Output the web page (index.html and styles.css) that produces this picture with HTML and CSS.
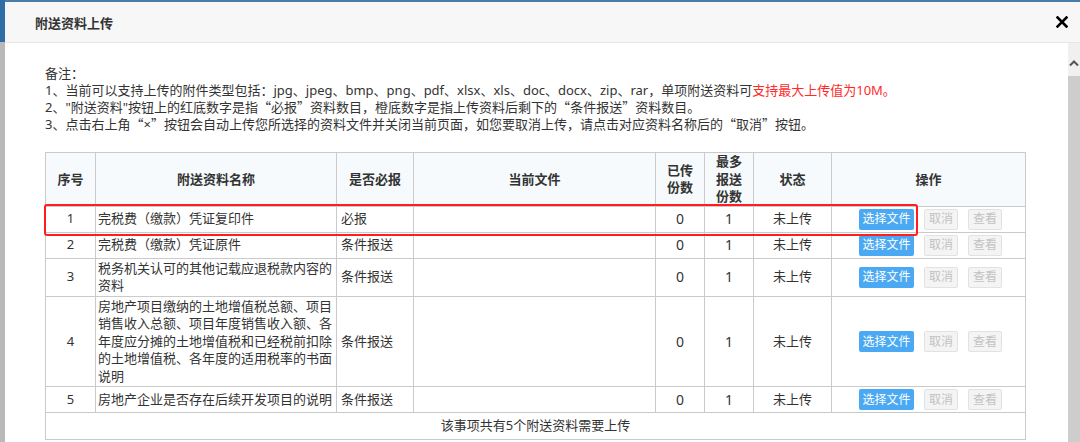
FILE: index.html
```html
<!DOCTYPE html>
<html lang="zh-CN">
<head>
    <meta charset="UTF-8">
    <title>附送资料上传</title>
    <link rel="stylesheet" href="styles.css">
</head>
<body>
<div class="page">
    <div class="side-strip"></div>
    <div class="modal">
        <div class="modal-header">
            <span class="modal-title">附送资料上传</span>
            <svg class="close" width="12" height="12" viewBox="0 0 12 12">
                <path d="M1.5 1.5 L10.5 10.5 M10.5 1.5 L1.5 10.5" stroke="#000" stroke-width="2.6" stroke-linecap="square"/>
            </svg>
        </div>
        <div class="modal-body">
            <div class="content">
                <div class="inner">
                    <div class="notes">
                        <p>备注：</p>
                        <p>1、当前可以支持上传的附件类型包括：jpg、jpeg、bmp、png、pdf、xlsx、xls、doc、docx、zip、rar，单项附送资料可<span class="warn">支持最大上传值为10M。</span></p>
                        <p>2、"附送资料"按钮上的红底数字是指<span class="q">“</span>必报<span class="q">”</span>资料数目，橙底数字是指上传资料后剩下的<span class="q">“</span>条件报送<span class="q">”</span>资料数目。</p>
                        <p>3、点击右上角<span class="q">“</span>×<span class="q">”</span>按钮会自动上传您所选择的资料文件并关闭当前页面，如您要取消上传，请点击对应资料名称后的<span class="q">“</span>取消<span class="q">”</span>按钮。</p>
                    </div>

                    <div class="table-wrap">
                        <table class="file-table">
                            <colgroup>
                                <col style="width:50px">
                                <col style="width:241px">
                                <col style="width:77px">
                                <col style="width:242px">
                                <col style="width:49px">
                                <col style="width:49px">
                                <col style="width:78px">
                                <col style="width:194px">
                            </colgroup>
                            <thead>
                                <tr>
                                    <th>序号</th>
                                    <th>附送资料名称</th>
                                    <th>是否必报</th>
                                    <th>当前文件</th>
                                    <th class="narrow">已传份数</th>
                                    <th class="narrow">最多报送份数</th>
                                    <th>状态</th>
                                    <th>操作</th>
                                </tr>
                            </thead>
                            <tbody>
                                <tr>
                                    <td class="c">1</td>
                                    <td class="name">完税费（缴款）凭证复印件</td>
                                    <td class="req">必报</td>
                                    <td></td>
                                    <td class="c num">0</td>
                                    <td class="c num">1</td>
                                    <td class="c">未上传</td>
                                    <td class="op"><div class="ops"><span class="btn btn-blue">选择文件</span><span class="btn btn-off">取消</span><span class="btn btn-off">查看</span></div></td>
                                </tr>
                                <tr>
                                    <td class="c">2</td>
                                    <td class="name">完税费（缴款）凭证原件</td>
                                    <td class="req">条件报送</td>
                                    <td></td>
                                    <td class="c num">0</td>
                                    <td class="c num">1</td>
                                    <td class="c">未上传</td>
                                    <td class="op"><div class="ops"><span class="btn btn-blue">选择文件</span><span class="btn btn-off">取消</span><span class="btn btn-off">查看</span></div></td>
                                </tr>
                                <tr>
                                    <td class="c">3</td>
                                    <td class="name">税务机关认可的其他记载应退税款内容的资料</td>
                                    <td class="req">条件报送</td>
                                    <td></td>
                                    <td class="c num">0</td>
                                    <td class="c num">1</td>
                                    <td class="c">未上传</td>
                                    <td class="op"><div class="ops"><span class="btn btn-blue">选择文件</span><span class="btn btn-off">取消</span><span class="btn btn-off">查看</span></div></td>
                                </tr>
                                <tr>
                                    <td class="c">4</td>
                                    <td class="name">房地产项目缴纳的土地增值税总额、项目销售收入总额、项目年度销售收入额、各年度应分摊的土地增值税和已经税前扣除的土地增值税、各年度的适用税率的书面说明</td>
                                    <td class="req">条件报送</td>
                                    <td></td>
                                    <td class="c num">0</td>
                                    <td class="c num">1</td>
                                    <td class="c">未上传</td>
                                    <td class="op"><div class="ops"><span class="btn btn-blue">选择文件</span><span class="btn btn-off">取消</span><span class="btn btn-off">查看</span></div></td>
                                </tr>
                                <tr>
                                    <td class="c">5</td>
                                    <td class="name">房地产企业是否存在后续开发项目的说明</td>
                                    <td class="req">条件报送</td>
                                    <td></td>
                                    <td class="c num">0</td>
                                    <td class="c num">1</td>
                                    <td class="c">未上传</td>
                                    <td class="op"><div class="ops"><span class="btn btn-blue">选择文件</span><span class="btn btn-off">取消</span><span class="btn btn-off">查看</span></div></td>
                                </tr>
                                <tr>
                                    <td class="footer" colspan="8">该事项共有5个附送资料需要上传</td>
                                </tr>
                            </tbody>
                        </table>
                        <div class="highlight"></div>
                    </div>
                </div>
                <div class="next-box"></div>
            </div>
            <div class="scrollbar">
                <div class="scroll-up">
                    <svg width="12" height="8" viewBox="0 0 12 8">
                        <polyline points="2,6.5 6,2.5 10,6.5" fill="none" stroke="#555" stroke-width="2"/>
                    </svg>
                </div>
                <div class="scroll-track"></div>
            </div>
        </div>
    </div>
</div>
</body>
</html>
```

FILE: styles.css
```css
* {
    box-sizing: border-box;
    margin: 0;
    padding: 0;
}

body {
    width: 1080px;
    height: 442px;
    overflow: hidden;
    background-color: #4a7ea9;
    font-family: 'Noto Sans', 'Noto Sans CJK SC', sans-serif;
    font-size: 13px;
    color: #333;
}

.page {
    display: flex;
    height: 442px;
    padding-top: 2px;
}

.side-strip {
    width: 5px;
    margin-top: -2px;
    background: linear-gradient(to bottom, #2f6ea5 0, #2f6ea5 42px, #b9b9b9 42px, #b9b9b9 100%);
}

.modal {
    flex: 1;
    display: flex;
    flex-direction: column;
    background-color: #fff;
}

.modal-header {
    height: 41px;
    display: flex;
    align-items: center;
    justify-content: space-between;
    padding: 0 12px 0 30px;
    background-color: #f7f7f7;
    border-bottom: 1px solid #e6e6e6;
}

.modal-title {
    font-weight: bold;
    font-size: 13px;
    color: #333;
}

.close {
    display: block;
}

.modal-body {
    flex: 1;
    display: flex;
    overflow: hidden;
}

.content {
    flex: 1;
    padding: 22px 24px 0 22px;
}

.inner {
    padding: 0 18px;
}

.notes p {
    height: 17px;
    line-height: 17px;
    white-space: nowrap;
}

.notes .q {
    font-family: 'Noto Sans CJK SC', sans-serif;
    line-height: 1;
}

.warn {
    color: #ff2a2a;
}

.table-wrap {
    position: relative;
    margin-top: 19px;
}

.file-table {
    width: 980px;
    table-layout: fixed;
    border-collapse: collapse;
    border: 1px solid #c6c6c6;
}

.file-table th,
.file-table td {
    border: 1px solid #cacaca;
    line-height: 17.5px;
    vertical-align: middle;
}

.file-table th {
    background-color: #f6fafc;
    font-weight: bold;
    text-align: center;
    padding: 1px 0;
    height: 53px;
}

.file-table th.narrow {
    padding: 0 10px;
}

.file-table td {
    padding: 1px 2px;
}

.file-table td.c {
    text-align: center;
}

.file-table td.num {
    font-size: 14px;
}

.file-table td.req {
    padding-left: 4px;
}

.file-table td.op {
    padding: 2px 0;
}

.ops {
    display: flex;
    justify-content: center;
    gap: 10px;
    padding-left: 4px;
}

.btn {
    display: inline-flex;
    align-items: center;
    justify-content: center;
    height: 21px;
    font-size: 12px;
    border-radius: 2px;
}

.btn-blue {
    width: 55px;
    background-color: #4aa9f2;
    color: #fff;
}

.btn-off {
    width: 34px;
    background-color: #f4f4f4;
    border: 1px solid #e2e2e2;
    color: #c2c2c2;
}

.file-table td.footer {
    text-align: center;
    height: 27px;
}

.highlight {
    position: absolute;
    left: -1px;
    top: 52px;
    width: 874px;
    height: 32px;
    border: 2.5px solid #ff1e1e;
    border-radius: 3px;
}

.next-box {
    height: 40px;
    margin-top: 2px;
    background-color: #f3f3f3;
    border-radius: 6px 6px 0 0;
}

.scrollbar {
    width: 12px;
    display: flex;
    flex-direction: column;
}

.scroll-up {
    height: 33px;
    background-color: #f0f0f0;
    display: flex;
    justify-content: center;
    padding-top: 16px;
}

.scroll-track {
    flex: 1;
    background-color: #cdcdcd;
}
```
